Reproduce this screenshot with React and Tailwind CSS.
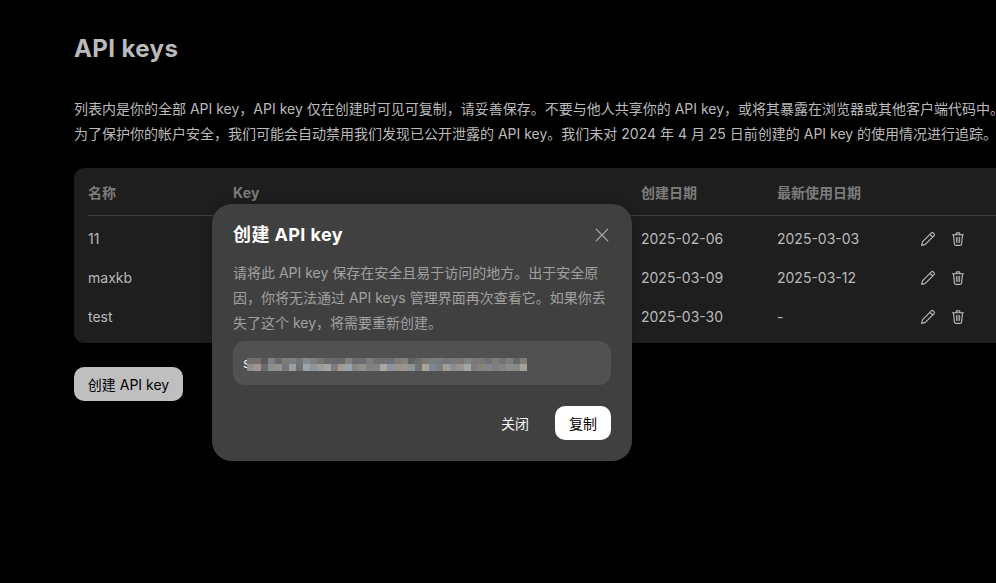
const rows = [
  { name: "11", created: "2025-02-06", used: "2025-03-03" },
  { name: "maxkb", created: "2025-03-09", used: "2025-03-12" },
  { name: "test", created: "2025-03-30", used: "-" },
];

// Two rows of blurred-out cells that hide the secret key
const maskTop = "6d7173 7a6b69 58595b 7d8184 68696b 807d78 7d8080 737373 828a8e 7d7f80 777573 6a6a6b 686866 686865 7e817f 6c6c6c 6a6e74 7a7d78 74706e 6f6f6f 6a7176 7d7975 83817a 606264 696f73 7c776f 7a7d7b 787c80 757578 757980 80756e 7f8582 7c7878 7b7775 707074 7f7e76 727275 7a7e7e 66696c 807c76".split(" ");
const maskBottom = "90908c a29590 6b6b6e 8a8f90 96908a 77777a 98a0a4 6f7072 9aa5aa 8c949a 9c9c98 a3a5a2 7d7b84 a59c90 99a4aa 868684 93918c 828282 808286 aaa9a2 8a93a2 99938c 9c9690 8b9596 707274 a8a496 7b8a94 7f7d7a a09e9a 8c8c94 9c918c a2a6a9 7f7c82 85867a 858288 807e80 868488 8c8c8c 8a8988 a5a198".split(" ");

function PencilIcon() {
  return (
    <svg width="16" height="16" viewBox="0 0 16 16" fill="none" stroke="currentColor" strokeWidth="1.15" strokeLinejoin="round">
      <path d="M1.6 14.4 2.6 10.7 11.4 1.9a1.3 1.3 0 0 1 1.8 0l.9.9a1.3 1.3 0 0 1 0 1.8L5.3 13.4ZM10 3.3 12.7 6" />
    </svg>
  );
}

function TrashIcon() {
  return (
    <svg width="16" height="16" viewBox="0 0 16 16" fill="none" stroke="currentColor" strokeWidth="1.15" strokeLinecap="round" strokeLinejoin="round">
      <path d="M2.5 3.7h11M5.9 3.4 6.5 1.9h3l.6 1.5M3.5 3.8l.9 9.2c.1.8.7 1.4 1.5 1.4h4.2c.8 0 1.4-.6 1.5-1.4l.9-9.2" />
      <path d="M6.4 6.4v5.2M8 6.4v5.2M9.6 6.4v5.2" strokeWidth="0.9" />
    </svg>
  );
}

function CloseIcon() {
  return (
    <svg width="14" height="14" viewBox="0 0 14 14" fill="none" stroke="currentColor" strokeWidth="1.1" strokeLinecap="round">
      <path d="M1.2 1.2 12.8 12.8M12.8 1.2 1.2 12.8" />
    </svg>
  );
}

function MaskRow({ cells, tall }) {
  return (
    <div className="flex">
      {cells.map((c, i) => (
        <span key={i} className={tall ? "h-[7px] w-[7px]" : "h-[6px] w-[7px]"} style={{ backgroundColor: "#" + c }} />
      ))}
    </div>
  );
}

function Dialog() {
  return (
    <div className="absolute left-[212px] top-[204px] flex h-[257px] w-[420px] flex-col rounded-[20px] bg-[#404040] px-[21px] pt-[17px] shadow-[0_0_12px_rgba(0,0,0,0.2)]">
      <div className="flex h-7 items-center justify-between">
        <h2 className="text-[18px] font-bold leading-7 tracking-[0.4px] text-white">创建 API key</h2>
        <button className="mr-[2px] text-[#b4b4b4]"><CloseIcon /></button>
      </div>
      <p className="mt-[11px] text-[14px] leading-[25px] text-[#a0a0a0]">
        <span className="block whitespace-nowrap">请将此 API key 保存在安全且易于访问的地方。出于安全原</span>
        <span className="block whitespace-nowrap">因，你将无法通过 API keys 管理界面再次查看它。如果你丢</span>
        <span className="block whitespace-nowrap">失了这个 key，将需要重新创建。</span>
      </p>
      <div className="mt-[6px] flex h-11 w-[378px] shrink-0 items-center rounded-[12px] bg-[#515151] pl-[10px]">
        <span className="w-[4px] text-[14px] leading-5 text-[#f4f4f4]">s</span>
        <div className="relative mt-[2px]">
          <MaskRow cells={maskTop} />
          <MaskRow cells={maskBottom} tall />
        </div>
      </div>
      <div className="mt-[21px] flex justify-end gap-3">
        <button className="h-[34px] w-[56px] rounded-[10px] text-[14px] text-[#f4f4f4]">关闭</button>
        <button className="h-[34px] w-[56px] rounded-[10px] bg-white text-[14px] text-black">复制</button>
      </div>
    </div>
  );
}

export default function App() {
  return (
    <div className="relative h-[583px] w-[996px] overflow-hidden bg-black pl-[74px] pt-[33px] font-[Inter,'Noto_Sans_CJK_SC',sans-serif] text-[14px] text-[#bababa]">
      <h1 className="text-[24px] font-bold leading-8 tracking-[0.4px]">API keys</h1>
      <div className="mt-[31px] whitespace-nowrap leading-[25px]">
        <p>列表内是你的全部 API key，API key 仅在创建时可见可复制，请妥善保存。不要与他人共享你的 API key，或将其暴露在浏览器或其他客户端代码中。</p>
        <p>为了保护你的帐户安全，我们可能会自动禁用我们发现已公开泄露的 API key。我们未对 2024 年 4 月 25 日前创建的 API key 的使用情况进行追踪。</p>
      </div>
      <div className="mt-[22px] h-[175px] w-[940px] rounded-[10px] bg-[#1e1e1e] px-[14px]">
        <div className="grid h-12 grid-cols-[145px_408px_136px_1fr] items-center border-b border-[#3e3e3e] pt-[2px] font-bold text-[#7c7c7c]">
          <span>名称</span>
          <span className="tracking-[0.2px]">Key</span>
          <span>创建日期</span>
          <span>最新使用日期</span>
        </div>
        <div className="pt-[3px]">
          {rows.map((r) => (
            <div key={r.name} className="grid h-[39px] grid-cols-[145px_408px_136px_143px_1fr] items-center">
              <span>{r.name}</span>
              <span />
              <span>{r.created}</span>
              <span>{r.used}</span>
              <span className="flex items-center gap-[14px]">
                <PencilIcon />
                <TrashIcon />
              </span>
            </div>
          ))}
        </div>
      </div>
      <button className="mt-6 h-[34px] w-[109px] rounded-[10px] bg-[#bfbfbf] text-[14px] text-black">创建 API key</button>
      <Dialog />
    </div>
  );
}
